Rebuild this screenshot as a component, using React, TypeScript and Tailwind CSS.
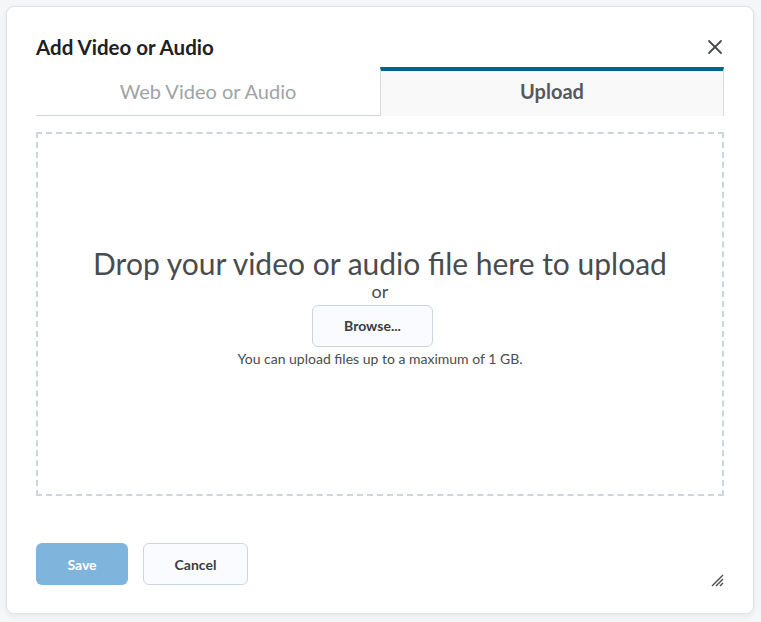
import { X } from 'lucide-react';

function ResizeGrip() {
  return (
    <svg width="14" height="14" viewBox="0 0 14 14" className="text-[#494c4e]">
      <path d="M2 13L13 2M6 13L13 6M10 13L13 10" stroke="currentColor" strokeWidth="1.4" />
    </svg>
  );
}

export default function App() {
  return (
    <div
      className="w-[761px] h-[622px] bg-[#f5f6f8] p-[6px] pb-[8px] pr-[7px]"
      style={{ fontFamily: 'Lato, "Open Sans", sans-serif' }}
    >
      <div className="h-full flex flex-col rounded-lg border border-[#dfe3e8] bg-white shadow-[0_2px_6px_rgba(0,0,0,0.06)] px-[29px]">
        {/* header */}
        <div className="flex items-center justify-between pt-[20px] h-[60px]">
          <h1 className="text-[20.5px] font-bold text-[#202122] leading-none">Add Video or Audio</h1>
          <button className="mr-[-3px] text-[#494c4e]">
            <X className="w-[24px] h-[24px]" strokeWidth={1.8} />
          </button>
        </div>

        {/* tabs */}
        <div className="grid grid-cols-2 h-[49px]">
          <div className="flex items-center justify-center border-b border-[#d3d9e3] text-[20px] text-[#a0a3a6]">
            Web Video or Audio
          </div>
          <div className="flex items-center justify-center pb-[5px] border-t-4 border-t-[#006586] border-x border-x-[#d8dcdf] bg-[#f9f9f9] text-[20px] font-bold text-[#565a5c]">
            Upload
          </div>
        </div>

        {/* drop zone */}
        <div className="mt-[16px] h-[364px] border-2 border-dashed border-[#cdd5dc] flex flex-col items-center justify-center text-[#494c4e] pb-[16px]">
          <p className="text-[30px] leading-[36px]">Drop your video or audio file here to upload</p>
          <p className="text-[18px] leading-[20px]">or</p>
          <button className="mt-[4px] mr-[15px] w-[121px] h-[42px] rounded-md border border-[#cdd5dc] bg-[#f9fbff] text-[14px] font-bold text-[#3a3d40]">
            Browse...
          </button>
          <p className="mt-[3px] text-[14px] leading-[18px]">You can upload files up to a maximum of 1 GB.</p>
        </div>

        {/* footer */}
        <div className="flex items-center justify-between mt-[47px]">
          <div className="flex gap-[15px]">
            <button className="w-[92px] h-[42px] rounded-md bg-[#7fb5dd] text-white text-[14px] font-bold">Save</button>
            <button className="w-[105px] h-[42px] rounded-md border border-[#cdd5dc] bg-[#f9fbff] text-[#3a3d40] text-[14px] font-bold">
              Cancel
            </button>
          </div>
          <div className="self-end mb-[-2px]">
            <ResizeGrip />
          </div>
        </div>
      </div>
    </div>
  );
}
